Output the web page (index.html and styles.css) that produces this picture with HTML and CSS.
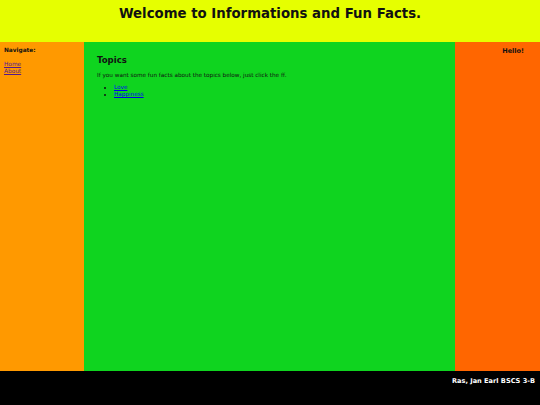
FILE: index.html
```html
<!DOCTYPE html>
<html>
<head>
<meta charset="utf-8">
<title>Informations and Fun Facts</title>
<link rel="stylesheet" href="styles.css">
</head>
<body>
<div class="page">
  <header class="header">
    <h1 class="title">Welcome to Informations and Fun Facts.</h1>
  </header>
  <div class="main">
    <nav class="left">
      <p class="nav-title">Navigate:</p>
      <a class="nav-link" href="#">Home</a>
      <a class="nav-link" href="#">About</a>
    </nav>
    <section class="center">
      <h2 class="topics">Topics</h2>
      <p class="intro">If you want some fun facts about the topics below, just click the ff.</p>
      <ul class="list">
        <li><a class="topic-link" href="#">Love</a></li>
        <li><a class="topic-link" href="#">Happiness</a></li>
      </ul>
    </section>
    <aside class="right">
      <p class="hello">Hello!</p>
    </aside>
  </div>
  <footer class="footer">
    <p class="credit">Ras, Jan Earl BSCS 3-B</p>
  </footer>
</div>
</body>
</html>
```

FILE: styles.css
```css
html, body {
  margin: 0;
  padding: 0;
}
body {
  font-family: "DejaVu Sans", Verdana, sans-serif;
  color: #000;
}
.page {
  display: flex;
  flex-direction: column;
  width: 540px;
  height: 405px;
}
.header {
  height: 42px;
  background: #e6ff00;
  display: flex;
  justify-content: center;
  box-sizing: border-box;
  padding-top: 6px;
}
.title {
  margin: 0;
  font-size: 13.3px;
  font-weight: bold;
  line-height: 16px;
  color: #111;
}
.main {
  flex: 1;
  display: flex;
}
.left {
  width: 84px;
  background: #ff9900;
  box-sizing: border-box;
  padding: 5px 4px;
  display: flex;
  flex-direction: column;
}
.nav-title {
  margin: 0 0 7px 0;
  font-size: 5.8px;
  font-weight: bold;
  line-height: 7px;
  color: #111;
}
.nav-link {
  font-size: 5.8px;
  line-height: 7px;
  color: #551a8b;
}
.center {
  flex: 1;
  background: #0fd41f;
  box-sizing: border-box;
  padding: 13px 13px;
}
.topics {
  margin: 0 0 6px 0;
  font-size: 8.6px;
  line-height: 11px;
  color: #111;
}
.intro {
  margin: 0 0 5px 0;
  font-size: 5.7px;
  line-height: 7px;
  color: #111;
}
.list {
  margin: 0;
  padding-left: 17px;
  font-size: 5.7px;
  line-height: 7px;
  color: #111;
}
.topic-link {
  color: #0000ee;
}
.right {
  width: 85px;
  background: #ff6600;
  box-sizing: border-box;
  padding: 5px 16px 0 0;
  text-align: right;
}
.hello {
  margin: 0;
  font-size: 6.5px;
  font-weight: bold;
  line-height: 9px;
  color: #111;
}
.footer {
  height: 34px;
  background: #000;
  box-sizing: border-box;
  padding: 6px 5px 0 0;
  text-align: right;
}
.credit {
  margin: 0;
  color: #fff;
  font-size: 6.6px;
  font-weight: bold;
  line-height: 9px;
}
```
